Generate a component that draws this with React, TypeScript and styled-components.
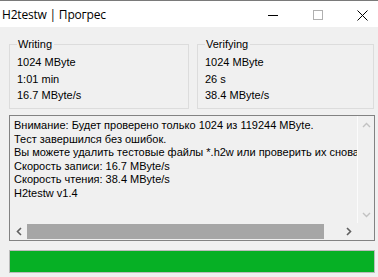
import React from 'react';
import styled, { createGlobalStyle } from 'styled-components';

const GlobalStyle = createGlobalStyle`
  html, body {
    margin: 0;
    padding: 0;
    background: #f0f0f0;
  }
  body {
    font-family: 'Liberation Sans', Arial, sans-serif;
    font-size: 11px;
    color: #000000;
  }
`;

const writing = ['1024 MByte', '1:01 min', '16.7 MByte/s'];
const verifying = ['1024 MByte', '26 s', '38.4 MByte/s'];

const log = [
  'Внимание: Будет проверено только 1024 из 119244 MByte.',
  'Тест завершился без ошибок.',
  'Вы можете удалить тестовые файлы *.h2w или проверить их снова.',
  'Скорость записи: 16.7 MByte/s',
  'Скорость чтения: 38.4 MByte/s',
  'H2testw v1.4',
];

function App() {
  return (
    <>
      <GlobalStyle />
      <Window>
        <TitleBar>
          <Title>H2testw | Прогрес</Title>
          <Controls>
            <ControlButton>
              <svg width="10" height="10" viewBox="0 0 10 10">
                <line x1="0" y1="5.5" x2="10" y2="5.5" stroke="#000" strokeWidth="1" />
              </svg>
            </ControlButton>
            <ControlButton>
              <svg width="10" height="10" viewBox="0 0 10 10">
                <rect x="0.5" y="0.5" width="9" height="9" fill="none" stroke="#b0b0b0" strokeWidth="1" />
              </svg>
            </ControlButton>
            <ControlButton>
              <svg width="11" height="11" viewBox="0 0 11 11">
                <path d="M0.5 0.5 L10.5 10.5 M10.5 0.5 L0.5 10.5" stroke="#000" strokeWidth="1" />
              </svg>
            </ControlButton>
          </Controls>
        </TitleBar>
        <Body>
          <Groups>
            <GroupBox>
              <Legend>Writing</Legend>
              {writing.map(line => (
                <StatLine key={line}>{line}</StatLine>
              ))}
            </GroupBox>
            <GroupBox>
              <Legend>Verifying</Legend>
              {verifying.map(line => (
                <StatLine key={line}>{line}</StatLine>
              ))}
            </GroupBox>
          </Groups>
          <LogBox>
            <LogText>
              {log.map(line => (
                <LogLine key={line}>{line}</LogLine>
              ))}
            </LogText>
            <VScroll>
              <Arrow>
                <svg width="9" height="6" viewBox="0 0 9 6">
                  <path d="M1 5 L4.5 1.5 L8 5" fill="none" stroke="#c2c2c2" strokeWidth="1.4" />
                </svg>
              </Arrow>
              <Arrow>
                <svg width="9" height="6" viewBox="0 0 9 6">
                  <path d="M1 1 L4.5 4.5 L8 1" fill="none" stroke="#c2c2c2" strokeWidth="1.4" />
                </svg>
              </Arrow>
            </VScroll>
            <HScroll>
              <Arrow>
                <svg width="6" height="9" viewBox="0 0 6 9">
                  <path d="M5 1 L1.5 4.5 L5 8" fill="none" stroke="#606060" strokeWidth="1.6" />
                </svg>
              </Arrow>
              <Track>
                <Thumb style={{ width: `${(297 / 313) * 100}%` }} />
              </Track>
              <Arrow>
                <svg width="6" height="9" viewBox="0 0 6 9">
                  <path d="M1 1 L4.5 4.5 L1 8" fill="none" stroke="#606060" strokeWidth="1.6" />
                </svg>
              </Arrow>
            </HScroll>
            <Corner />
          </LogBox>
          <Progress>
            <ProgressFill style={{ width: '100%' }} />
          </Progress>
        </Body>
      </Window>
    </>
  );
}

export default App;

const Window = styled.div`
  width: 378px;
  height: 277px;
  display: flex;
  flex-direction: column;
  background: #f0f0f0;
  border-top: 1px solid #7a7a7a;
  box-sizing: border-box;
  overflow: hidden;
`;

const TitleBar = styled.div`
  height: 26px;
  background: #ffffff;
  display: flex;
  align-items: center;
  justify-content: space-between;
  flex-shrink: 0;
`;

const Title = styled.div`
  font-family: 'Open Sans', 'Noto Sans', sans-serif;
  font-size: 12px;
  padding-left: 2px;
  letter-spacing: -0.2px;
  color: #000000;
`;

const Controls = styled.div`
  display: flex;
  height: 100%;
  margin-right: -7px;
`;

const ControlButton = styled.div`
  width: 45px;
  height: 100%;
  display: flex;
  align-items: center;
  justify-content: center;
  margin-top: 1px;
`;

const Body = styled.div`
  padding: 11px 3px 0 9px;
  display: flex;
  flex-direction: column;
`;

const Groups = styled.div`
  display: grid;
  grid-template-columns: 180px 177px;
  column-gap: 8px;
`;

const GroupBox = styled.fieldset`
  margin: 0;
  padding: 3px 6px 3px 7px;
  border: 1px solid #dcdcdc;
  min-width: 0;
  height: 71px;
  box-sizing: border-box;
`;

const Legend = styled.legend`
  padding: 0 2px 0 1px;
  margin-left: 0;
  font-size: 11px;
  line-height: 13px;
`;

const StatLine = styled.div`
  line-height: 16.5px;
  white-space: nowrap;
`;

const LogBox = styled.div`
  margin-top: 6px;
  width: 366px;
  height: 126px;
  box-sizing: border-box;
  border: 1px solid #828282;
  background: #f0f0f0;
  display: grid;
  grid-template-columns: 1fr 17px;
  grid-template-rows: 1fr 17px;
`;

const LogText = styled.div`
  padding: 3px 0 0 4px;
  overflow: hidden;
  white-space: nowrap;
`;

const LogLine = styled.div`
  line-height: 13.5px;
`;

const VScroll = styled.div`
  display: flex;
  flex-direction: column;
  justify-content: space-between;
  background: #f0f0f0;
  border-left: 1px solid #fbfbfb;
`;

const Arrow = styled.div`
  width: 17px;
  height: 17px;
  display: flex;
  align-items: center;
  justify-content: center;
  flex-shrink: 0;
`;

const HScroll = styled.div`
  display: flex;
  align-items: stretch;
  background: #f0f0f0;
`;

const Track = styled.div`
  flex: 1;
  display: flex;
  align-items: center;
`;

const Thumb = styled.div`
  height: 15px;
  background: #a6a6a6;
`;

const Corner = styled.div`
  background: #f0f0f0;
`;

const Progress = styled.div`
  margin-top: 9px;
  width: 366px;
  height: 23px;
  box-sizing: border-box;
  border: 1px solid #bcbcbc;
  background: #e6e6e6;
`;

const ProgressFill = styled.div`
  height: 100%;
  background: #06b025;
`;
